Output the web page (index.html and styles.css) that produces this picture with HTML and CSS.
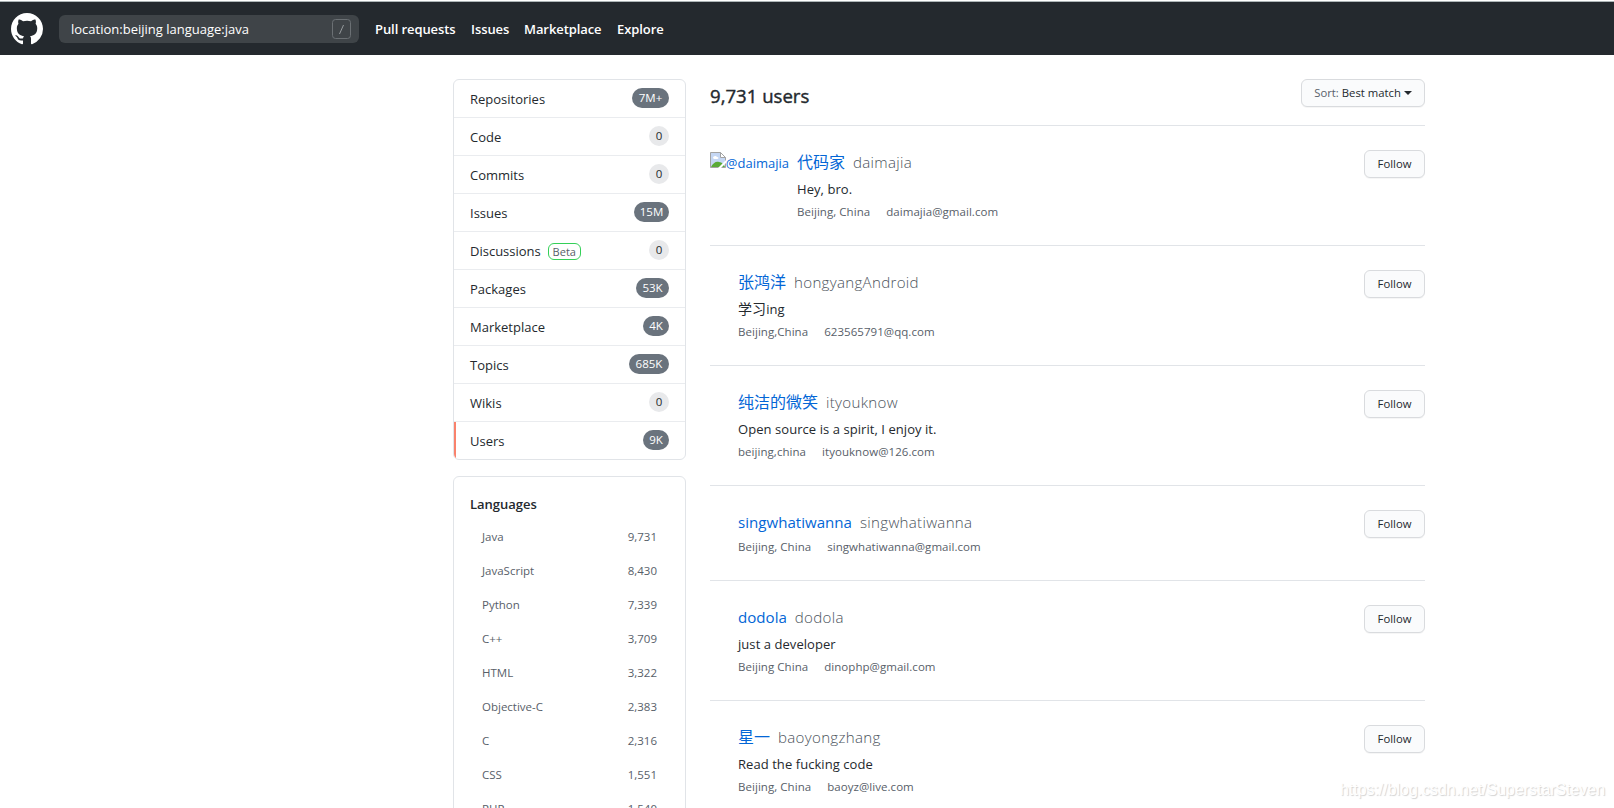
FILE: index.html
```html
<!DOCTYPE html>
<html lang="en">
<head>
    <meta charset="UTF-8">
    <title>User search results</title>
    <link rel="stylesheet" href="styles.css">
</head>
<body>
<header class="header">
    <a class="logo" href="#">
        <svg width="32" height="32" viewBox="0 0 16 16" fill="#fff"><path fill-rule="evenodd" d="M8 0C3.58 0 0 3.58 0 8c0 3.54 2.29 6.53 5.47 7.59.4.07.55-.17.55-.38 0-.19-.01-.82-.01-1.49-2.01.37-2.53-.49-2.69-.94-.09-.23-.48-.94-.82-1.13-.28-.15-.68-.52-.01-.53.63-.01 1.08.58 1.23.82.72 1.21 1.87.87 2.33.66.07-.52.28-.87.51-1.07-1.78-.2-3.64-.89-3.64-3.95 0-.87.31-1.59.82-2.15-.08-.2-.36-1.02.08-2.12 0 0 .67-.21 2.2.82.64-.18 1.32-.27 2-.27.68 0 1.36.09 2 .27 1.53-1.04 2.2-.82 2.2-.82.44 1.1.16 1.92.08 2.12.51.56.82 1.27.82 2.15 0 3.07-1.87 3.75-3.65 3.95.29.25.54.73.54 1.48 0 1.07-.01 1.93-.01 2.2 0 .21.15.46.55.38A8.013 8.013 0 0016 8c0-4.42-3.58-8-8-8z"/></svg>
    </a>
    <div class="search">
        <span class="search-text">location:beijing language:java</span>
        <svg class="slash" width="19" height="20" fill="none"><rect x=".5" y=".5" width="18" height="19" rx="3" stroke="#6b7074"/><path d="M11.5 6L7.5 15" stroke="#959a9d"/></svg>
    </div>
    <nav class="nav">
        <a class="nav-pulls" href="#">Pull requests</a>
        <a class="nav-issues" href="#">Issues</a>
        <a class="nav-market" href="#">Marketplace</a>
        <a class="nav-explore" href="#">Explore</a>
    </nav>
</header>

<div class="container">
    <aside class="sidebar">
        <nav class="menu">
            <a href="#">Repositories <span class="counter dark w37">7M+</span></a>
            <a href="#">Code <span class="counter">0</span></a>
            <a href="#">Commits <span class="counter">0</span></a>
            <a href="#">Issues <span class="counter dark w35">15M</span></a>
            <a href="#">Discussions <span class="beta">Beta</span> <span class="counter">0</span></a>
            <a href="#">Packages <span class="counter dark w33">53K</span></a>
            <a href="#">Marketplace <span class="counter dark w26">4K</span></a>
            <a href="#">Topics <span class="counter dark w40">685K</span></a>
            <a href="#">Wikis <span class="counter">0</span></a>
            <a class="selected" href="#">Users <span class="counter dark w26">9K</span></a>
        </nav>
        <div class="languages">
            <h2>Languages</h2>
            <ul>
                <li><span>Java</span><span>9,731</span></li>
                <li><span>JavaScript</span><span>8,430</span></li>
                <li><span>Python</span><span>7,339</span></li>
                <li><span>C++</span><span>3,709</span></li>
                <li><span>HTML</span><span>3,322</span></li>
                <li><span>Objective-C</span><span>2,383</span></li>
                <li><span>C</span><span>2,316</span></li>
                <li><span>CSS</span><span>1,551</span></li>
                <li><span>PHP</span><span>1,540</span></li>
            </ul>
        </div>
    </aside>

    <main class="main">
        <div class="title">
            <h3>9,731 users</h3>
            <button class="btn sort"><span class="muted">Sort:</span> Best match <i class="caret"></i></button>
        </div>

        <div class="user">
            <!-- avatar that failed to load -->
            <a class="avatar broken" href="#">
                <svg width="16" height="16"><path d="M.5 .5h10l5 5v10H.5z" fill="#c5d7f4" stroke="#a3a3a3"/><path d="M10.500 .5v5h5z" fill="#fff" stroke="#a3a3a3"/><path d="M3 6c0-2 3-3 4-1 2 0 2 2 0 2H4z" fill="#fff"/><path d="M1 15c2-4 5-6 8-5 3 0 5 3 6 5z" fill="#5aaa36"/><path d="M8 16l8-8v3l-5 5z" fill="#fff"/></svg><span>@daimajia</span>
            </a>
            <div class="info">
                <div class="name"><a class="zh" href="#">代码家</a><span>daimajia</span></div>
                <p class="bio">Hey, bro.</p>
                <div class="meta"><span>Beijing, China</span><span>daimajia@gmail.com</span></div>
            </div>
            <button class="btn follow">Follow</button>
        </div>

        <div class="user">
            <a class="avatar" href="#"></a>
            <div class="info">
                <div class="name"><a class="zh" href="#">张鸿洋</a><span>hongyangAndroid</span></div>
                <p class="bio"><span class="zh-bio">学习</span>ing</p>
                <div class="meta"><span>Beijing,China</span><span>623565791@qq.com</span></div>
            </div>
            <button class="btn follow">Follow</button>
        </div>

        <div class="user">
            <a class="avatar" href="#"></a>
            <div class="info">
                <div class="name"><a class="zh" href="#">纯洁的微笑</a><span>ityouknow</span></div>
                <p class="bio">Open source is a spirit, I enjoy it.</p>
                <div class="meta"><span>beijing,china</span><span>ityouknow@126.com</span></div>
            </div>
            <button class="btn follow">Follow</button>
        </div>

        <div class="user">
            <a class="avatar" href="#"></a>
            <div class="info">
                <div class="name"><a href="#">singwhatiwanna</a><span>singwhatiwanna</span></div>
                <div class="meta"><span>Beijing, China</span><span>singwhatiwanna@gmail.com</span></div>
            </div>
            <button class="btn follow">Follow</button>
        </div>

        <div class="user">
            <a class="avatar" href="#"></a>
            <div class="info">
                <div class="name"><a href="#">dodola</a><span>dodola</span></div>
                <p class="bio">just a developer</p>
                <div class="meta"><span>Beijing China</span><span>dinophp@gmail.com</span></div>
            </div>
            <button class="btn follow">Follow</button>
        </div>

        <div class="user">
            <a class="avatar" href="#"></a>
            <div class="info">
                <div class="name"><a class="zh" href="#">星一</a><span>baoyongzhang</span></div>
                <p class="bio">Read the fucking code</p>
                <div class="meta"><span>Beijing, China</span><span>baoyz@live.com</span></div>
            </div>
            <button class="btn follow">Follow</button>
        </div>
    </main>
</div>

<div class="watermark">https://blog.csdn.net/SuperstarSteven</div>
</body>
</html>
```
FILE: styles.css
```css
* {
    box-sizing: border-box;
    margin: 0;
    padding: 0;
}

body {
    height: 808px;
    overflow: hidden;
    background: #fff;
    color: #24292e;
    font: 13px/21px "Open Sans", "Noto Sans CJK SC", sans-serif;
}

a {
    color: #0366d6;
    text-decoration: none;
}

ul {
    list-style: none;
}

/* header */
.header {
    display: flex;
    align-items: center;
    height: 54px;
    margin-top: 1px;
    padding: 1px 11px 0;
    border-top: 1px solid #adb5b7;
    background: #24292e;
}

.logo {
    height: 32px;
}

.search {
    display: flex;
    align-items: center;
    justify-content: space-between;
    width: 300px;
    height: 28px;
    margin-left: 16px;
    padding: 0 8px 0 12px;
    border-radius: 6px;
    background: #3f4448;
    color: #fff;
}

.nav {
    display: flex;
    margin-left: 16px;
}

.nav a {
    color: #fff;
    font-weight: 600;
    letter-spacing: -.08px;
    white-space: nowrap;
}

.nav-pulls {
    width: 96px;
}

.nav-issues {
    width: 53px;
}

.nav-market {
    width: 93px;
}

/* page */
.container {
    display: flex;
    gap: 24px;
    width: 972px;
    margin: 24px 0 0 453px;
}

.sidebar {
    flex: none;
    width: 233px;
}

.menu,
.languages {
    border: 1px solid #e1e4e8;
    border-radius: 6px;
}

.menu {
    margin-bottom: 16px;
    overflow: hidden;
}

.menu a {
    display: flex;
    align-items: flex-start;
    height: 38px;
    padding: 9px 16px 0;
    border-bottom: 1px solid #eaecef;
    color: #24292e;
}

.menu a:last-child {
    height: 37px;
    border-bottom: 0;
}

.menu .selected {
    padding-left: 14px;
    border-left: 2px solid #f9826c;
}

.counter {
    width: 20px;
    height: 20px;
    margin: -1px 0 0 auto;
    border-radius: 10px;
    background: #e8e9eb;
    font-size: 11.5px;
    line-height: 19px;
    text-align: center;
}

.dark {
    background: #6a737d;
    color: #fff;
}

.w26 {
    width: 26px;
}

.w33 {
    width: 33px;
}

.w35 {
    width: 35px;
}

.w37 {
    width: 37px;
}

.w40 {
    width: 40px;
}

.beta {
    width: 33px;
    height: 17px;
    margin: 2px 0 0 7px;
    border: 1px solid #34d058;
    border-radius: 6px;
    color: #586069;
    font-size: 11px;
    line-height: 15px;
    text-align: center;
}

.languages {
    padding: 16px;
}

.languages h2 {
    margin-bottom: 6px;
    padding-top: 1px;
    font-size: 13px;
    font-weight: 600;
    line-height: 20px;
}

.languages li {
    display: flex;
    justify-content: space-between;
    padding: 8px 12px;
    color: #586069;
    font-size: 11.5px;
    line-height: 18px;
}

/* results */
.main {
    flex: 1;
}

.title {
    display: flex;
    justify-content: space-between;
    height: 46px;
}

.title h3 {
    padding-top: 2px;
    font-size: 18.6px;
    font-weight: 400;
    line-height: 30px;
    -webkit-text-stroke: .4px #24292e;
}

.btn {
    height: 28px;
    border: 1px solid #d9dbde;
    border-radius: 6px;
    background: #fafbfc;
    box-shadow: 0 1px 0 rgba(27, 31, 35, .04);
    color: #24292e;
    font: 500 11.3px/18px "Open Sans", sans-serif;
}

.sort {
    width: 124px;
    white-space: nowrap;
}

.muted {
    color: #586069;
}

.caret {
    display: inline-block;
    border: 4px solid transparent;
    border-top-color: #24292e;
    border-bottom: 0;
    vertical-align: 2px;
}

.user {
    display: flex;
    align-items: flex-start;
    padding: 24px 0;
    border-top: 1px solid #e1e4e8;
}

.avatar {
    flex: none;
    width: 20px;
    margin-right: 8px;
}

.broken {
    display: flex;
    width: 79px;
    padding-top: 2px;
}

.broken span {
    padding-top: 1px;
}

.info {
    flex: 1;
}

.name {
    display: flex;
    gap: 8px;
    height: 24px;
    margin-bottom: 4px;
    font-size: 15.1px;
    line-height: 24px;
}

.name .zh {
    font-size: 16px;
}

.name span {
    color: #4c545c;
    font-weight: 300;
    letter-spacing: .3px;
}

.bio {
    height: 21px;
    margin-bottom: 4px;
    padding-top: 1px;
    line-height: 20px;
    letter-spacing: .06px;
}

.zh-bio {
    font-size: 14px;
}

.meta {
    display: flex;
    gap: 16px;
    color: #586069;
    font-size: 11.5px;
    line-height: 18px;
    letter-spacing: .05px;
}

.follow {
    width: 61px;
}

.watermark {
    position: absolute;
    right: 9px;
    bottom: 8px;
    color: #fff;
    font: 15.9px/20px "Liberation Sans", sans-serif;
    text-shadow: 1px 1px 1px #d2d2d2;
}
```
